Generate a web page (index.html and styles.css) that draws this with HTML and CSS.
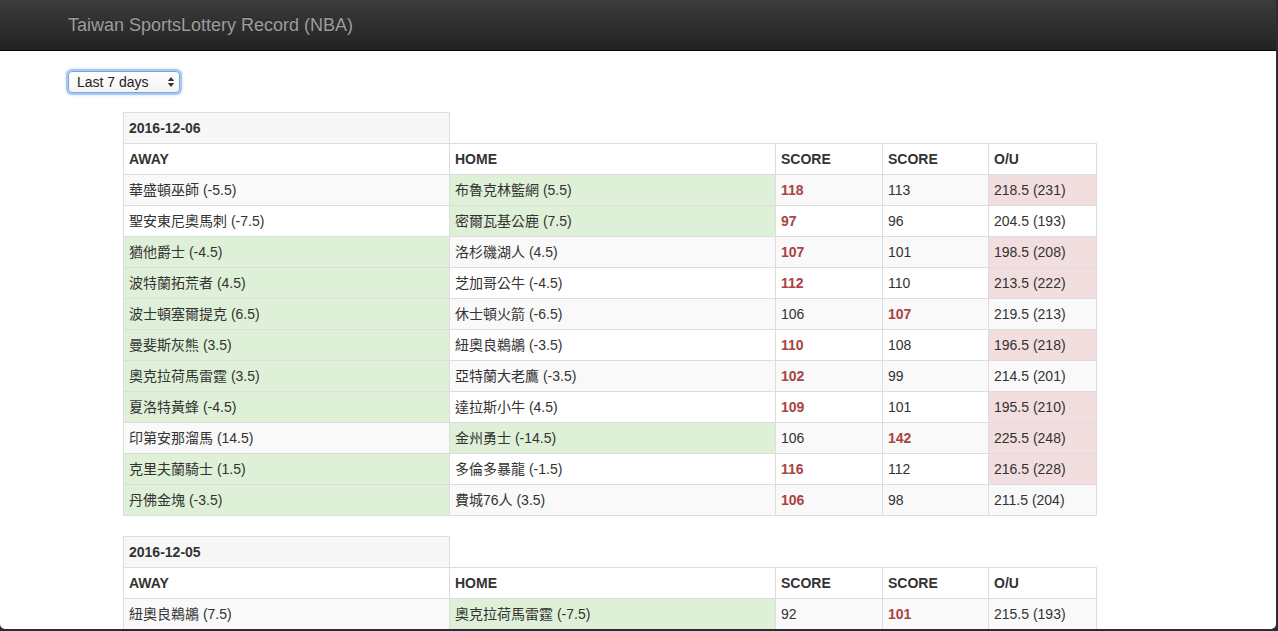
FILE: index.html
```html
<!DOCTYPE html>
<html lang="zh-Hant">
<head>
<meta charset="utf-8">
<title>Taiwan SportsLottery Record (NBA)</title>
<link rel="stylesheet" href="styles.css">
</head>
<body>
<div class="window">
  <nav class="navbar">
    <span class="brand">Taiwan SportsLottery Record (NBA)</span>
  </nav>
  <main class="content">
    <div class="select-wrap">
      <select class="range">
        <option>Last 7 days</option>
      </select>
      <svg class="select-arrows" width="8" height="12" viewBox="0 0 8 12"><path d="M4 1 L7.2 5 H0.8 Z M4 11 L7.2 7 H0.8 Z" fill="#333"/></svg>
    </div>

    <div class="tables">
      <table class="games">
        <colgroup><col class="c-team"><col class="c-team"><col class="c-score1"><col class="c-score2"><col class="c-ou"></colgroup>
        <thead>
          <tr><th class="date">2016-12-06</th></tr>
          <tr><th>AWAY</th><th>HOME</th><th>SCORE</th><th>SCORE</th><th>O/U</th></tr>
        </thead>
        <tbody>
          <tr><td>華盛頓巫師 (-5.5)</td><td class="win">布魯克林籃網 (5.5)</td><td class="hi">118</td><td>113</td><td class="over">218.5 (231)</td></tr>
          <tr><td>聖安東尼奧馬刺 (-7.5)</td><td class="win">密爾瓦基公鹿 (7.5)</td><td class="hi">97</td><td>96</td><td>204.5 (193)</td></tr>
          <tr><td class="win">猶他爵士 (-4.5)</td><td>洛杉磯湖人 (4.5)</td><td class="hi">107</td><td>101</td><td class="over">198.5 (208)</td></tr>
          <tr><td class="win">波特蘭拓荒者 (4.5)</td><td>芝加哥公牛 (-4.5)</td><td class="hi">112</td><td>110</td><td class="over">213.5 (222)</td></tr>
          <tr><td class="win">波士頓塞爾提克 (6.5)</td><td>休士頓火箭 (-6.5)</td><td>106</td><td class="hi">107</td><td>219.5 (213)</td></tr>
          <tr><td class="win">曼斐斯灰熊 (3.5)</td><td>紐奧良鵜鶘 (-3.5)</td><td class="hi">110</td><td>108</td><td class="over">196.5 (218)</td></tr>
          <tr><td class="win">奧克拉荷馬雷霆 (3.5)</td><td>亞特蘭大老鷹 (-3.5)</td><td class="hi">102</td><td>99</td><td>214.5 (201)</td></tr>
          <tr><td class="win">夏洛特黃蜂 (-4.5)</td><td>達拉斯小牛 (4.5)</td><td class="hi">109</td><td>101</td><td class="over">195.5 (210)</td></tr>
          <tr><td>印第安那溜馬 (14.5)</td><td class="win">金州勇士 (-14.5)</td><td>106</td><td class="hi">142</td><td class="over">225.5 (248)</td></tr>
          <tr><td class="win">克里夫蘭騎士 (1.5)</td><td>多倫多暴龍 (-1.5)</td><td class="hi">116</td><td>112</td><td class="over">216.5 (228)</td></tr>
          <tr><td class="win">丹佛金塊 (-3.5)</td><td>費城76人 (3.5)</td><td class="hi">106</td><td>98</td><td>211.5 (204)</td></tr>
        </tbody>
      </table>

      <table class="games">
        <colgroup><col class="c-team"><col class="c-team"><col class="c-score1"><col class="c-score2"><col class="c-ou"></colgroup>
        <thead>
          <tr><th class="date">2016-12-05</th></tr>
          <tr><th>AWAY</th><th>HOME</th><th>SCORE</th><th>SCORE</th><th>O/U</th></tr>
        </thead>
        <tbody>
          <tr><td>紐奧良鵜鶘 (7.5)</td><td class="win">奧克拉荷馬雷霆 (-7.5)</td><td>92</td><td class="hi">101</td><td>215.5 (193)</td></tr>
        </tbody>
      </table>
    </div>
  </main>
</div>
</body>
</html>
```

FILE: styles.css
```css
html, body {
  margin: 0;
  padding: 0;
}

body {
  background: #2b2a35;
  font-family: "Liberation Sans", Arial, "Noto Sans CJK TC", sans-serif;
  font-size: 14px;
  line-height: 20px;
  color: #333;
  overflow: hidden;
}

.window {
  width: 1276px;
  height: 629px;
  background: #fff;
  overflow: hidden;
  border-bottom-right-radius: 5px;
  border-bottom-left-radius: 5px;
}

.navbar {
  height: 50px;
  background: linear-gradient(to bottom, #3c3c3c 0, #222 100%);
  border-bottom: 1px solid #080808;
  padding-left: 68px;
  display: flex;
  align-items: center;
}

.brand {
  font-size: 18px;
  line-height: 20px;
  color: #9d9d9d;
  text-shadow: 0 -1px 0 rgba(0, 0, 0, .25);
}

.content {
  padding: 20px 0 0 68px;
}

.select-wrap {
  position: relative;
  width: 112px;
  height: 22px;
}

.range {
  -webkit-appearance: none;
  appearance: none;
  box-sizing: border-box;
  width: 112px;
  height: 22px;
  margin: 0;
  padding: 0 0 0 8px;
  border: 1px solid #7aa7e0;
  border-radius: 4px;
  background: linear-gradient(to bottom, #fff 0, #f3f3f3 100%);
  box-shadow: 0 0 0 2px #a6c8f3, 0 0 3px 2px #c3daf7;
  font-family: "Liberation Sans", Arial, sans-serif;
  font-size: 14px;
  line-height: 20px;
  color: #222;
  outline: none;
}

.select-arrows {
  position: absolute;
  right: 5px;
  top: 5px;
  pointer-events: none;
}

.tables {
  padding: 19px 0 0 55px;
}

.games {
  width: 973px;
  border-collapse: collapse;
  border-spacing: 0;
  margin-bottom: 20px;
  table-layout: fixed;
}

.c-team { width: 326px; }
.c-score1 { width: 107px; }
.c-score2 { width: 106px; }
.c-ou { width: 108px; }

.games th,
.games td {
  border: 1px solid #ddd;
  padding: 5px 5px;
  text-align: left;
  vertical-align: top;
  line-height: 20px;
  white-space: nowrap;
}

.games th {
  font-weight: bold;
}

.games th.date {
  background: #f7f7f7;
}

.games tbody tr:nth-child(odd) td {
  background: #f9f9f9;
}

.games tbody tr td.win {
  background: #dff0d8;
}

.games tbody tr td.over {
  background: #f2dede;
}

.games td.hi {
  color: #a94442;
  font-weight: bold;
}
```
